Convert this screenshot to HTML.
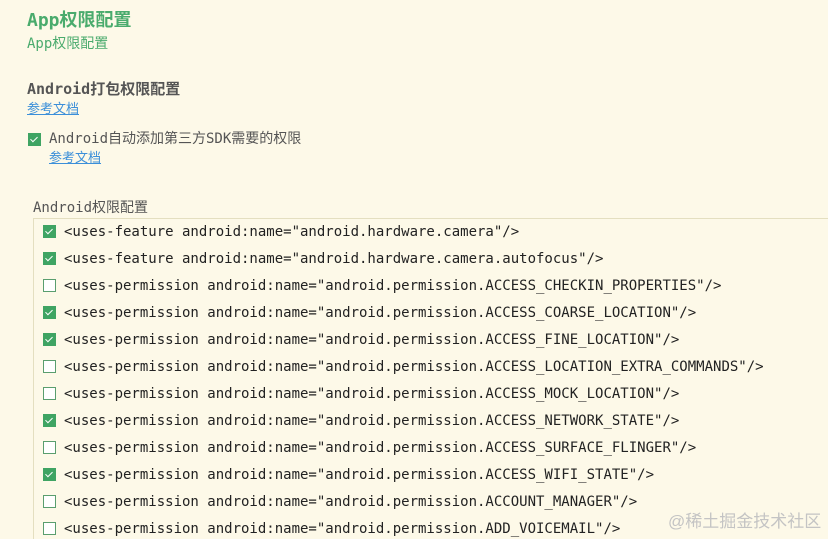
<!DOCTYPE html>
<html><head><meta charset="utf-8"><style>
html,body{margin:0;width:828px;height:539px;overflow:hidden}
body{background:#fdf9e8;font-family:"DejaVu Sans Mono","Noto Sans CJK SC",monospace;position:relative}
.a{position:absolute;white-space:nowrap;line-height:1}
.cb{position:absolute;width:13px;height:13px;box-sizing:border-box;border:1px solid #5a9e6e;background:#fff}
.cb.on{background:#3fa463;border-color:#3fa463}
.cb.on::after{content:"";position:absolute;left:3px;top:1px;width:3px;height:6px;border:solid #fff;border-width:0 1.5px 1.5px 0;transform:rotate(45deg)}
.lk{color:#3b8fd9;text-decoration:underline;font-size:13px}
.row{position:absolute;left:0;width:828px;height:27px;white-space:nowrap}
.row span{position:absolute;left:64px;top:0;font-size:14px;color:#222;line-height:1;white-space:nowrap}
.row .cb{left:43px;top:0}
</style></head><body>
<div class="a" style="left:27px;top:12px;font-size:18px;font-weight:bold;color:#4aab6d">App权限配置</div>
<div class="a" style="left:27px;top:37px;font-size:14px;color:#4aab6d">App权限配置</div>
<div class="a" style="left:27px;top:82px;font-size:15px;font-weight:bold;color:#555">Android打包权限配置</div>
<div class="a lk" style="left:27px;top:103px">参考文档</div>
<div class="cb on" style="left:28px;top:133px"></div>
<div class="a" style="left:49px;top:132px;font-size:14px;color:#555">Android自动添加第三方SDK需要的权限</div>
<div class="a lk" style="left:49px;top:152px">参考文档</div>
<div class="a" style="left:33px;top:201px;font-size:14px;color:#555">Android权限配置</div>
<div style="position:absolute;left:33px;top:218px;width:800px;height:330px;border:1px solid #e4dfc0;box-sizing:border-box"></div>
<div class="row" style="top:225px"><div class="cb on"></div><span>&lt;uses-feature android:name="android.hardware.camera"/&gt;</span></div>
<div class="row" style="top:252px"><div class="cb on"></div><span>&lt;uses-feature android:name="android.hardware.camera.autofocus"/&gt;</span></div>
<div class="row" style="top:279px"><div class="cb"></div><span>&lt;uses-permission android:name="android.permission.ACCESS_CHECKIN_PROPERTIES"/&gt;</span></div>
<div class="row" style="top:306px"><div class="cb on"></div><span>&lt;uses-permission android:name="android.permission.ACCESS_COARSE_LOCATION"/&gt;</span></div>
<div class="row" style="top:333px"><div class="cb on"></div><span>&lt;uses-permission android:name="android.permission.ACCESS_FINE_LOCATION"/&gt;</span></div>
<div class="row" style="top:360px"><div class="cb"></div><span>&lt;uses-permission android:name="android.permission.ACCESS_LOCATION_EXTRA_COMMANDS"/&gt;</span></div>
<div class="row" style="top:387px"><div class="cb"></div><span>&lt;uses-permission android:name="android.permission.ACCESS_MOCK_LOCATION"/&gt;</span></div>
<div class="row" style="top:414px"><div class="cb on"></div><span>&lt;uses-permission android:name="android.permission.ACCESS_NETWORK_STATE"/&gt;</span></div>
<div class="row" style="top:441px"><div class="cb"></div><span>&lt;uses-permission android:name="android.permission.ACCESS_SURFACE_FLINGER"/&gt;</span></div>
<div class="row" style="top:468px"><div class="cb on"></div><span>&lt;uses-permission android:name="android.permission.ACCESS_WIFI_STATE"/&gt;</span></div>
<div class="row" style="top:495px"><div class="cb"></div><span>&lt;uses-permission android:name="android.permission.ACCOUNT_MANAGER"/&gt;</span></div>
<div class="row" style="top:522px"><div class="cb"></div><span>&lt;uses-permission android:name="android.permission.ADD_VOICEMAIL"/&gt;</span></div>
<div class="a" style="left:668px;top:513px;font-size:17px;color:#c4c4c4;font-family:'Liberation Sans','Noto Sans CJK SC',sans-serif">@稀土掘金技术社区</div>
</body></html>
